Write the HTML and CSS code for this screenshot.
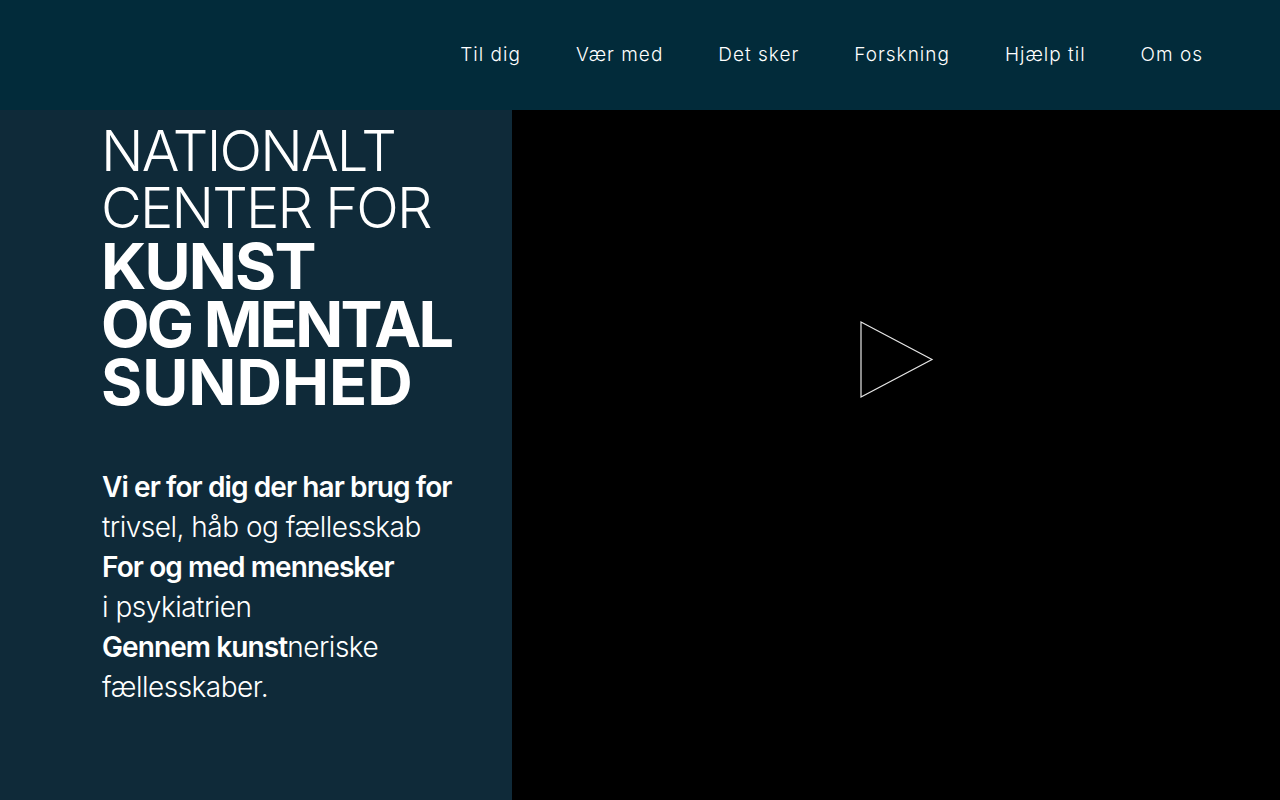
FILE: index.html
```html
<!DOCTYPE html>
<html lang="da">
<head>
<meta charset="utf-8">
<title>Nationalt Center for Kunst og Mental Sundhed</title>
<link rel="stylesheet" href="styles.css">
</head>
<body>
<header class="site-header">
  <nav class="main-nav">
    <a href="#">Til dig</a>
    <a href="#">Vær med</a>
    <a href="#">Det sker</a>
    <a href="#">Forskning</a>
    <a href="#">Hjælp til</a>
    <a href="#">Om os</a>
  </nav>
</header>
<main class="hero">
  <section class="intro">
    <h1 class="title">
      <span class="light">NATIONALT</span>
      <span class="light">CENTER FOR</span>
      <span class="bold">KUNST</span>
      <span class="bold tight">OG MENTAL</span>
      <span class="bold wide">SUNDHED</span>
    </h1>
    <p class="lead">
      <strong>Vi er for dig der har brug for</strong><br>
      trivsel, håb og fællesskab<br>
      <strong>For og med mennesker</strong><br>
      i psykiatrien<br>
      <strong>Gennem kunst</strong>neriske<br>
      fællesskaber.
    </p>
  </section>
  <section class="video">
    <button class="play" aria-label="Afspil video">
      <svg width="74" height="78" viewBox="0 0 74 78">
        <polygon points="1,1 72,38.5 1,76" fill="none" stroke="#e6e6e6" stroke-width="1.2"/>
      </svg>
    </button>
  </section>
</main>
</body>
</html>
```
FILE: styles.css
```css
* { box-sizing: border-box; }
html, body { margin: 0; padding: 0; }
body {
  width: 1280px;
  height: 800px;
  overflow: hidden;
  background: #000;
  font-family: "Inter", "Lato", sans-serif;
  color: #fff;
}
.site-header {
  height: 110px;
  background: #022b3a;
  display: flex;
  justify-content: flex-end;
  align-items: center;
  padding-right: 77px;
}
.main-nav {
  display: flex;
  gap: 55px;
  padding-bottom: 1px;
}
.main-nav a {
  color: #fff;
  text-decoration: none;
  font-size: 19px;
  font-weight: 300;
  letter-spacing: 1px;
}
.hero {
  display: grid;
  grid-template-columns: 512px 1fr;
  height: 690px;
}
.intro {
  background: #0f2a39;
  padding: 13px 0 0 101px;
}
.title {
  margin: 0;
}
.title span { display: block; }
.title .light {
  font-size: 56px;
  line-height: 57px;
  font-weight: 300;
  letter-spacing: -1.8px;
}
.title .bold {
  font-size: 63px;
  line-height: 58px;
  font-weight: 700;
  letter-spacing: -1.8px;
}
.title .bold.tight { letter-spacing: -2.7px; }
.title .bold.wide { letter-spacing: 0; }
.lead {
  margin: 56px 0 0 1px;
  font-size: 28px;
  line-height: 40px;
  font-weight: 300;
  letter-spacing: -0.5px;
}
.lead strong {
  font-weight: 600;
  letter-spacing: -0.9px;
}
.video {
  background: #000;
  display: flex;
  justify-content: center;
  align-items: flex-start;
  padding-top: 211px;
  padding-left: 2px;
}
.play {
  background: none;
  border: 0;
  padding: 0;
  margin: 0;
  cursor: pointer;
  display: block;
  line-height: 0;
}
```
